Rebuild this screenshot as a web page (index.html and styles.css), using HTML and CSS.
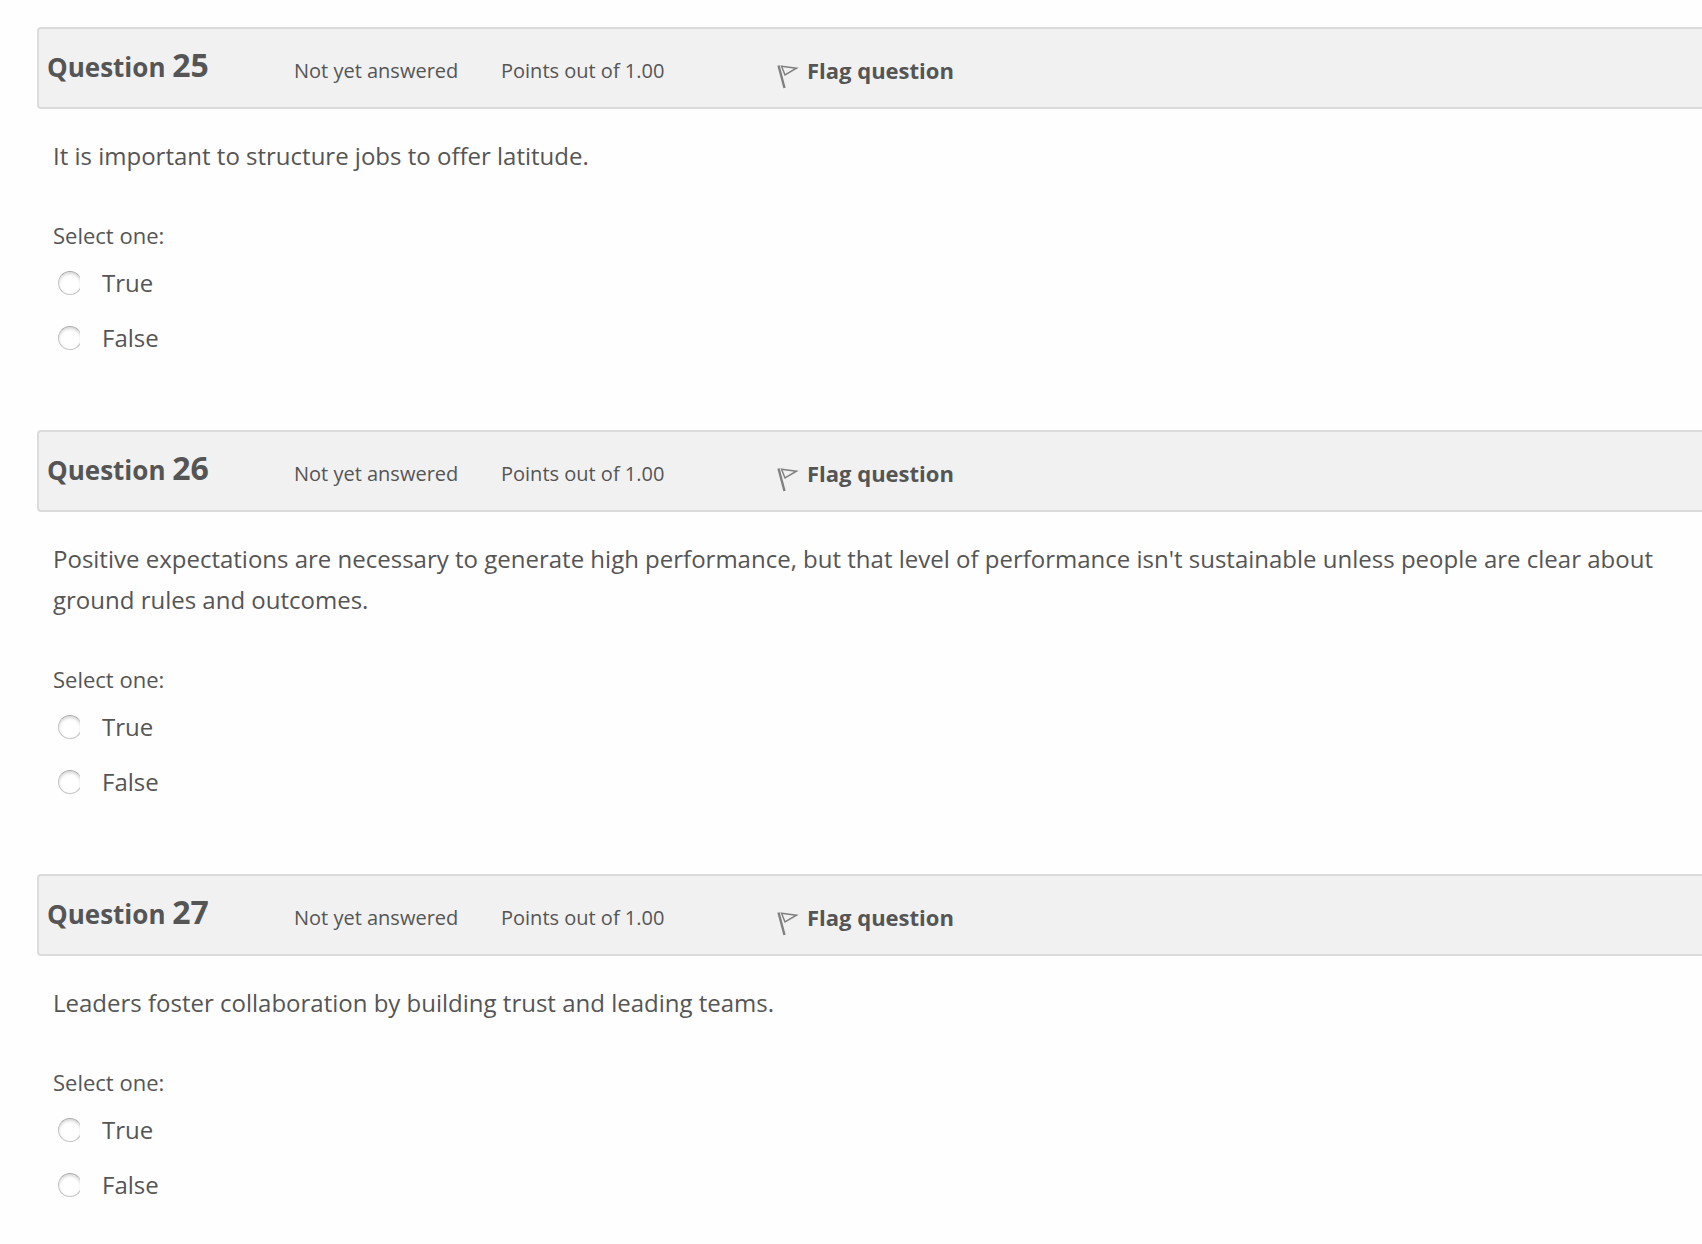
FILE: index.html
```html
<!DOCTYPE html>
<html lang="en">
<head>
    <meta charset="UTF-8">
    <meta name="viewport" content="width=device-width, initial-scale=1.0">
    <title>Quiz</title>
    <link rel="stylesheet" href="styles.css">
</head>
<body>
    <main class="quiz">
        <!-- Question 25 -->
        <section class="question">
            <header class="info">
                <h3 class="number">Question <span class="qno">25</span></h3>
                <div class="state">Not yet answered</div>
                <div class="grade">Points out of 1.00</div>
                <button class="flag" type="button">
                    <svg class="flag-icon" viewBox="0 0 22 24" aria-hidden="true">
                        <path class="pole" d="M1.5 0.5 L7.5 23"/>
                        <path class="pennant" d="M4.5 1.2 L19.5 3.2 L8 10 Z"/>
                    </svg>
                    Flag question
                </button>
            </header>
            <div class="content">
                <p class="qtext">It is important to structure jobs to offer latitude.</p>
                <fieldset class="answers">
                    <legend class="prompt">Select one:</legend>
                    <div class="option">
                        <input class="radio" type="radio" name="q25" id="q25true">
                        <label for="q25true">True</label>
                    </div>
                    <div class="option">
                        <input class="radio" type="radio" name="q25" id="q25false">
                        <label for="q25false">False</label>
                    </div>
                </fieldset>
            </div>
        </section>

        <!-- Question 26 -->
        <section class="question">
            <header class="info">
                <h3 class="number">Question <span class="qno">26</span></h3>
                <div class="state">Not yet answered</div>
                <div class="grade">Points out of 1.00</div>
                <button class="flag" type="button">
                    <svg class="flag-icon" viewBox="0 0 22 24" aria-hidden="true">
                        <path class="pole" d="M1.5 0.5 L7.5 23"/>
                        <path class="pennant" d="M4.5 1.2 L19.5 3.2 L8 10 Z"/>
                    </svg>
                    Flag question
                </button>
            </header>
            <div class="content">
                <p class="qtext">Positive expectations are necessary to generate high performance, but that level of performance isn't sustainable unless people are clear about ground rules and outcomes.</p>
                <fieldset class="answers">
                    <legend class="prompt">Select one:</legend>
                    <div class="option">
                        <input class="radio" type="radio" name="q26" id="q26true">
                        <label for="q26true">True</label>
                    </div>
                    <div class="option">
                        <input class="radio" type="radio" name="q26" id="q26false">
                        <label for="q26false">False</label>
                    </div>
                </fieldset>
            </div>
        </section>

        <!-- Question 27 -->
        <section class="question">
            <header class="info">
                <h3 class="number">Question <span class="qno">27</span></h3>
                <div class="state">Not yet answered</div>
                <div class="grade">Points out of 1.00</div>
                <button class="flag" type="button">
                    <svg class="flag-icon" viewBox="0 0 22 24" aria-hidden="true">
                        <path class="pole" d="M1.5 0.5 L7.5 23"/>
                        <path class="pennant" d="M4.5 1.2 L19.5 3.2 L8 10 Z"/>
                    </svg>
                    Flag question
                </button>
            </header>
            <div class="content">
                <p class="qtext">Leaders foster collaboration by building trust and leading teams.</p>
                <fieldset class="answers">
                    <legend class="prompt">Select one:</legend>
                    <div class="option">
                        <input class="radio" type="radio" name="q27" id="q27true">
                        <label for="q27true">True</label>
                    </div>
                    <div class="option">
                        <input class="radio" type="radio" name="q27" id="q27false">
                        <label for="q27false">False</label>
                    </div>
                </fieldset>
            </div>
        </section>
    </main>
</body>
</html>
```
FILE: styles.css
```css
* {
    box-sizing: border-box;
}

body {
    margin: 0;
    background: #fefefe;
    color: #555;
    font-family: "Open Sans", sans-serif;
    font-size: 24px;
    line-height: 34px;
}

.quiz {
    display: flex;
    flex-direction: column;
    gap: 75px;
    padding: 27px 0 0 37px;
}

.info {
    display: grid;
    grid-template-columns: 247px 207px 276px 1fr;
    align-items: start;
    padding: 16px 8px;
    background: #f1f1f1;
    border: 2px solid #dbdbdb;
    border-right: 0;
    border-radius: 4px 0 0 4px;
}

.number {
    margin: 0;
    font-size: 26px;
    line-height: 40px;
    font-weight: bold;
}

.qno {
    font-size: 32px;
}

.state,
.grade {
    padding-top: 6px;
    font-size: 20px;
    line-height: 40px;
}

.flag {
    display: flex;
    align-items: center;
    gap: 8px;
    padding: 6px 0 0;
    border: 0;
    background: none;
    color: inherit;
    font: bold 22px/38px "Open Sans", sans-serif;
    cursor: pointer;
}

.flag-icon {
    width: 22px;
    height: 24px;
    margin-top: 13px;
    fill: none;
    stroke: #808080;
}

.pole {
    stroke-width: 2.4;
}

.pennant {
    stroke-width: 1.5;
}

.content {
    padding: 26px 16px 0;
}

.qtext {
    margin: 0 0 43px;
    line-height: 41px;
}

.answers {
    margin: 0;
    padding: 0;
    border: 0;
}

.prompt {
    padding: 0;
    margin-bottom: 15px;
    font-size: 22px;
    line-height: 32px;
}

.option {
    display: flex;
    align-items: center;
    gap: 20px;
    padding-left: 5px;
}

.option + .option {
    margin-top: 21px;
}

/* the ring is cut off on its right side */
.radio {
    appearance: none;
    width: 24px;
    height: 24px;
    margin: 0;
    border: 1px solid #c4c4c4;
    border-top-color: #a8a8a8;
    border-radius: 50%;
    background: #fff;
    box-shadow: inset 0 2px 3px #d8d8d8;
    clip-path: inset(0 2px 0 0);
}

.radio:checked {
    background: radial-gradient(#555 35%, #fff 40%);
}
```
